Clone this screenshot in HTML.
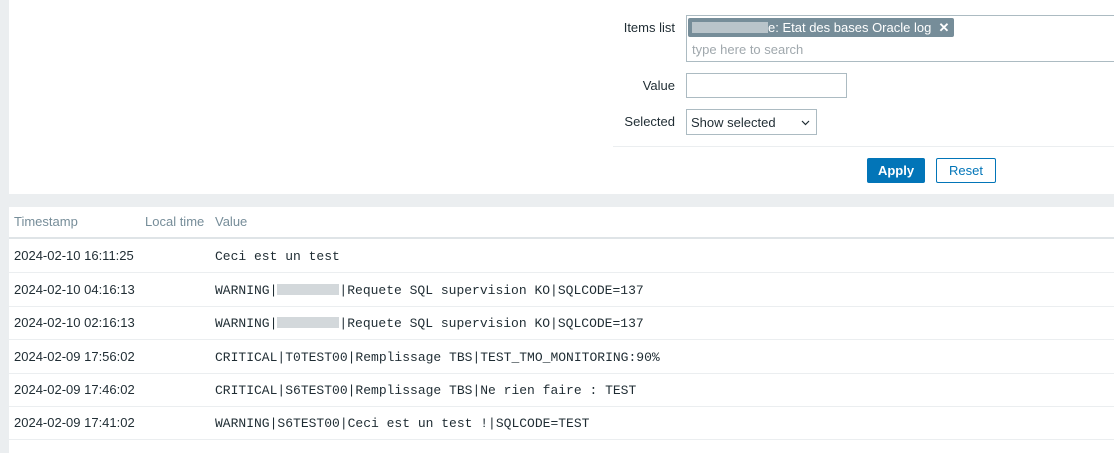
<!DOCTYPE html>
<html><head><meta charset="utf-8"><style>
*{margin:0;padding:0;box-sizing:border-box}
body{width:1114px;height:453px;background:#ebeef0;font-family:"Liberation Sans",sans-serif;font-size:13px;color:#1f2c33;position:relative;overflow:hidden}
.top{position:absolute;left:9px;top:0;width:1105px;height:194px;background:#fff}
.lbl{position:absolute;right:439px;text-align:right;font-size:13px}
.box{position:absolute;border:1px solid #acbbc2;background:#fff}
.tag{position:absolute;left:688px;top:18px;height:19px;width:266px;background:#768d99;color:#fff;border-radius:2px;font-size:13px;line-height:19px;padding-left:4px;white-space:nowrap}
.blur{display:inline-block;width:76px;height:11px;background:#b9c4ca;vertical-align:middle;margin-top:-2px}
.tbl{position:absolute;left:9px;top:207px;width:1105px;height:246px;background:#fff}
.th{position:absolute;top:214px;color:#768d99;font-size:13px}
.row{position:absolute;left:9px;width:1105px;height:34px;border-bottom:1px solid #ebeef0}
.ts{position:absolute;left:5px;top:9px;font-size:13px}
.v{position:absolute;left:206px;top:10px;font-family:"Liberation Mono",monospace;font-size:13px;white-space:pre;color:#1f2c33}
.bl{display:inline-block;width:62px;height:11px;background:#d3d8db;vertical-align:middle;margin-top:-2px}
</style></head><body>
<div class="top"></div>
<div class="lbl" style="top:20px">Items list</div>
<div class="box" style="left:686px;top:15px;width:430px;height:47px"></div>
<div class="tag"><span class="blur"></span>e: Etat des bases Oracle log &nbsp;<b>✕</b></div>
<div style="position:absolute;left:692px;top:42px;color:#a0a8ad;font-size:13px">type here to search</div>
<div class="lbl" style="top:78px">Value</div>
<div class="box" style="left:686px;top:73px;width:161px;height:25px"></div>
<div class="lbl" style="top:114px">Selected</div>
<div class="box" style="left:686px;top:109px;width:131px;height:26px;padding:5px 0 0 4px;font-size:13px">Show selected<svg style="position:absolute;right:6px;top:10px" width="9" height="6" viewBox="0 0 9 6"><path d="M1 1l3.5 3.5L8 1" fill="none" stroke="#1f2c33" stroke-width="1.2"/></svg></div>
<div style="position:absolute;left:613px;top:146px;width:501px;height:1px;background:#ebeef0"></div>
<div style="position:absolute;left:867px;top:158px;width:58px;height:25px;background:#0275b8;border-radius:2px;color:#fff;font-weight:bold;text-align:center;line-height:25px">Apply</div>
<div style="position:absolute;left:936px;top:158px;width:60px;height:25px;border:1px solid #0275b8;border-radius:2px;color:#0275b8;text-align:center;line-height:23px">Reset</div>
<div class="tbl"></div>
<div class="th" style="left:14px">Timestamp</div>
<div class="th" style="left:145px">Local time</div>
<div class="th" style="left:215px">Value</div>
<div style="position:absolute;left:9px;top:237px;width:1105px;height:2px;background:#dfe4e7"></div>
<div class="row" style="top:239px"><div class="ts">2024-02-10 16:11:25</div><div class="v">Ceci est un test</div></div>
<div class="row" style="top:273px"><div class="ts">2024-02-10 04:16:13</div><div class="v">WARNING|<span class="bl"></span>|Requete SQL supervision KO|SQLCODE=137</div></div>
<div class="row" style="top:306px"><div class="ts">2024-02-10 02:16:13</div><div class="v">WARNING|<span class="bl"></span>|Requete SQL supervision KO|SQLCODE=137</div></div>
<div class="row" style="top:340px"><div class="ts">2024-02-09 17:56:02</div><div class="v">CRITICAL|T0TEST00|Remplissage TBS|TEST_TMO_MONITORING:90%</div></div>
<div class="row" style="top:373px"><div class="ts">2024-02-09 17:46:02</div><div class="v">CRITICAL|S6TEST00|Remplissage TBS|Ne rien faire : TEST</div></div>
<div class="row" style="top:406px"><div class="ts">2024-02-09 17:41:02</div><div class="v">WARNING|S6TEST00|Ceci est un test !|SQLCODE=TEST</div></div>
</body></html>
